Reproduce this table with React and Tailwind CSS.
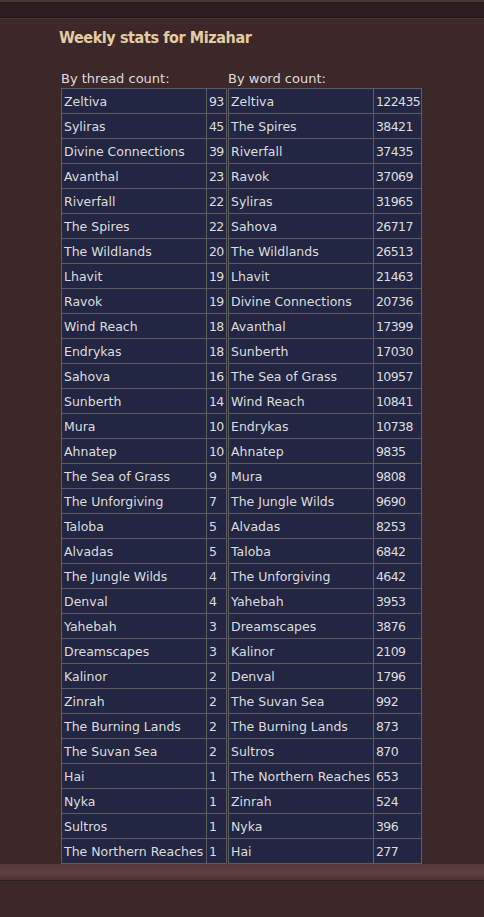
import React from "react";

const byThread = [
  ["Zeltiva", 93], ["Syliras", 45], ["Divine Connections", 39], ["Avanthal", 23],
  ["Riverfall", 22], ["The Spires", 22], ["The Wildlands", 20], ["Lhavit", 19],
  ["Ravok", 19], ["Wind Reach", 18], ["Endrykas", 18], ["Sahova", 16],
  ["Sunberth", 14], ["Mura", 10], ["Ahnatep", 10], ["The Sea of Grass", 9],
  ["The Unforgiving", 7], ["Taloba", 5], ["Alvadas", 5], ["The Jungle Wilds", 4],
  ["Denval", 4], ["Yahebah", 3], ["Dreamscapes", 3], ["Kalinor", 2],
  ["Zinrah", 2], ["The Burning Lands", 2], ["The Suvan Sea", 2], ["Hai", 1],
  ["Nyka", 1], ["Sultros", 1], ["The Northern Reaches", 1],
];

const byWord = [
  ["Zeltiva", 122435], ["The Spires", 38421], ["Riverfall", 37435], ["Ravok", 37069],
  ["Syliras", 31965], ["Sahova", 26717], ["The Wildlands", 26513], ["Lhavit", 21463],
  ["Divine Connections", 20736], ["Avanthal", 17399], ["Sunberth", 17030],
  ["The Sea of Grass", 10957], ["Wind Reach", 10841], ["Endrykas", 10738],
  ["Ahnatep", 9835], ["Mura", 9808], ["The Jungle Wilds", 9690], ["Alvadas", 8253],
  ["Taloba", 6842], ["The Unforgiving", 4642], ["Yahebah", 3953], ["Dreamscapes", 3876],
  ["Kalinor", 2109], ["Denval", 1796], ["The Suvan Sea", 992], ["The Burning Lands", 873],
  ["Sultros", 870], ["The Northern Reaches", 653], ["Zinrah", 524], ["Nyka", 396], ["Hai", 277],
];

function StatTable({ title, rows, nameW, numW }) {
  return (
    <div className="flex flex-col">
      <div className="h-[18px] text-[13px] leading-[18px] text-[#dcdcdc]">{title}</div>
      <table className="border-collapse table-fixed" style={{ width: nameW + numW + 1 }}>
        <colgroup>
          <col style={{ width: nameW }} />
          <col style={{ width: numW }} />
        </colgroup>
        <tbody>
          {rows.map(([n, v]) => (
            <tr key={n} className="h-[25px]">
              <td className="border border-[#5b5b5b] bg-[#222642] px-[2px] text-[12.5px] leading-[23px] text-[#dddddd] whitespace-nowrap overflow-hidden">{n}</td>
              <td className="border border-[#5b5b5b] bg-[#222642] px-[2px] text-[12.5px] tracking-[-0.6px] leading-[23px] text-[#dddddd] whitespace-nowrap overflow-hidden">{v}</td>
            </tr>
          ))}
        </tbody>
      </table>
    </div>
  );
}

export default function App() {
  return (
    <div className="w-[484px] h-[917px] bg-[#3d2829] flex flex-col" style={{ fontFamily: '"DejaVu Sans", "Liberation Sans", sans-serif' }}>
      <div className="h-[19px] flex flex-col">
        <div className="h-[2px] bg-[#4b3436]"></div>
        <div className="h-[1px] bg-[#2a1c1d]"></div>
        <div className="h-[14px] bg-[#2c1e1f]"></div>
        <div className="h-[1px] bg-[#231617]"></div>
        <div className="h-[1px] bg-[#4a3335]"></div>
      </div>
      <div className="pl-[59px] pt-[8px] h-[51px] text-[16px] tracking-[-0.4px] font-bold text-[#e3cda2] leading-[22px]" style={{ fontFamily: '"DejaVu Sans Condensed", "DejaVu Sans", sans-serif', fontStretch: "condensed" }}>Weekly stats for Mizahar</div>
      <div className="flex pl-[61px] gap-[1px]">
        <StatTable title="By thread count:" rows={byThread} nameW={145} numW={20} />
        <StatTable title="By word count:" rows={byWord} nameW={145} numW={48} />
      </div>
      <div className="h-[16px] bg-gradient-to-b from-[#573739] via-[#5e3f41] to-[#4e3335]"></div>
      <div className="h-[1px] bg-[#2c1d1e]"></div>
      <div className="flex-1 bg-[#3b2728]"></div>
    </div>
  );
}
